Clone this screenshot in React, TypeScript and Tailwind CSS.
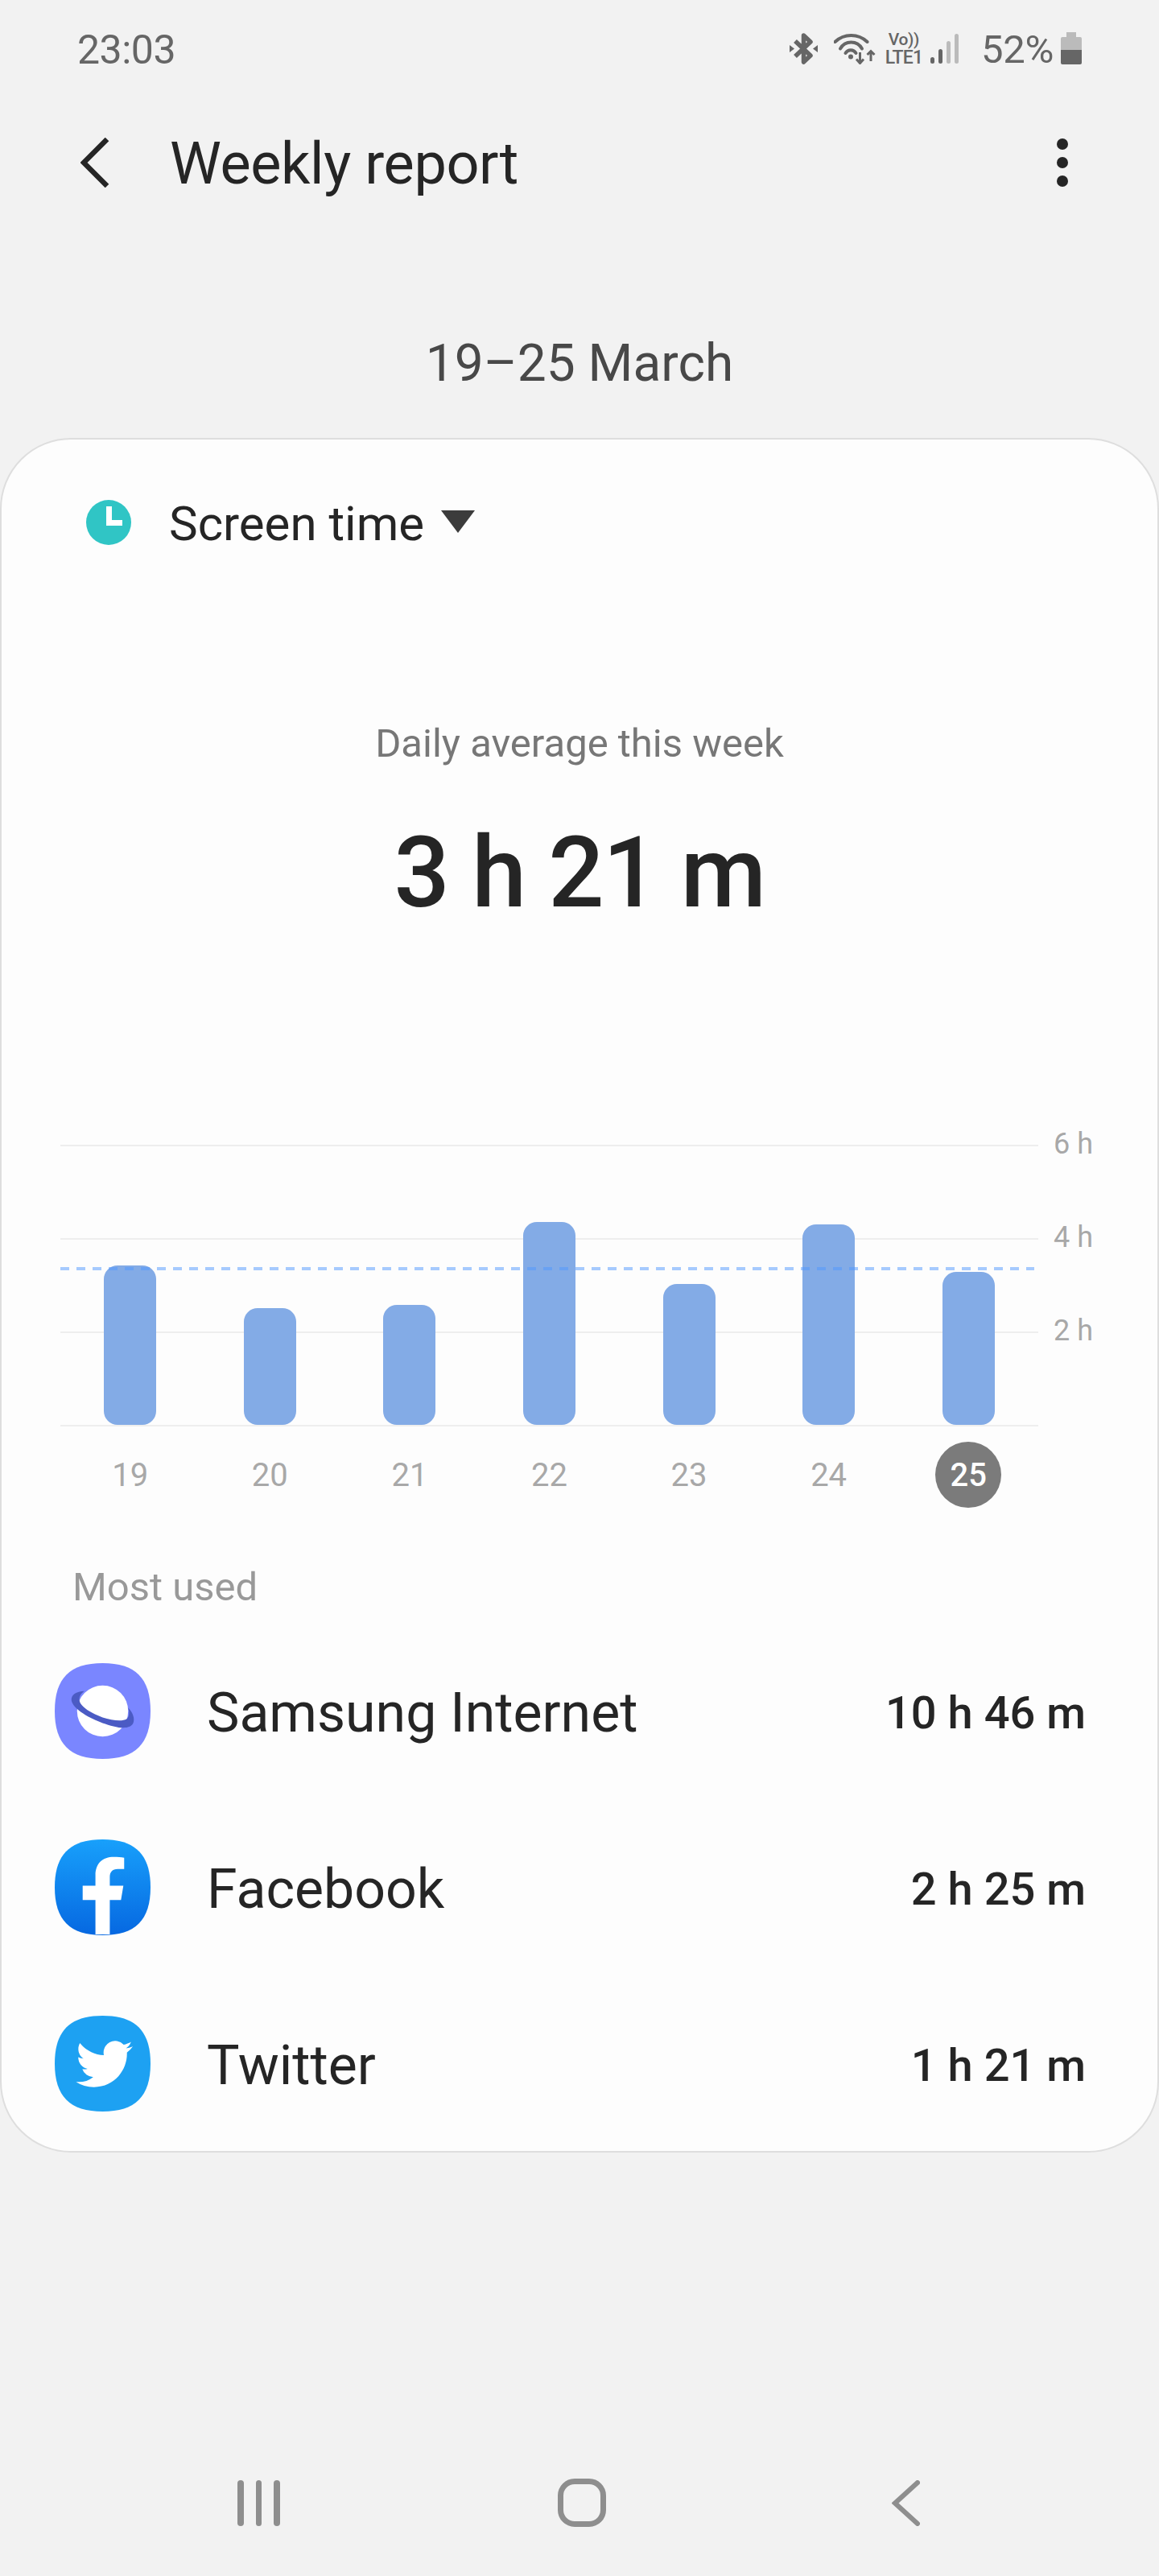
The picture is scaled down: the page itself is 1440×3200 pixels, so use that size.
import type { ReactNode } from "react";

const font = "font-['Roboto',sans-serif]";

// Bar tops were measured from the 1770px baseline of the chart.
const bars = [
  { day: "19", height: 198 },
  { day: "20", height: 145 },
  { day: "21", height: 149 },
  { day: "22", height: 252 },
  { day: "23", height: 175 },
  { day: "24", height: 249 },
  { day: "25", height: 190 },
];

const squircle =
  "M60 0C101 0 120 19 120 60C120 101 101 120 60 120C19 120 0 101 0 60C0 19 19 0 60 0Z";

function StatusBar() {
  return (
    <div className="flex h-[120px] items-center justify-between pl-[96px] pr-[96px] text-[#666666]">
      <span className="pt-[3px] text-[50px] leading-none tracking-[-0.5px]">23:03</span>
      <div className="flex items-center">
        <svg width="35" height="41" viewBox="0 0 35 41" fill="none">
          <path
            d="M7 11L26 29L17.5 37V4L26 12L7 30"
            stroke="#666666"
            strokeWidth="5.5"
            strokeLinejoin="round"
          />
          <path d="M0 16L6 20.5L0 25Z M35 16L29 20.5L35 25Z" fill="#666666" />
        </svg>
        <svg className="ml-[20px]" width="52" height="39" viewBox="0 0 52 39" fill="none">
          <g stroke="#666666" strokeWidth="4" strokeLinecap="round">
            <path d="M1.5 11A29 29 0 0 1 41.5 11" />
            <path d="M8 19.5A15.4 15.4 0 0 1 35 19.5" />
            <path d="M14.5 25A7.5 7.5 0 0 1 27.5 25" />
          </g>
          <circle cx="21" cy="29.5" r="3" fill="#666666" />
          <path d="M32.5 24V37M28 32.5L32.5 37.5L37 32.5" stroke="#666666" strokeWidth="3" />
          <path d="M46 35V23M41.5 27L46 22.5L50.5 27" stroke="#666666" strokeWidth="3" />
        </svg>
        <div className="ml-[11px] flex w-[47px] flex-col items-center pt-[2px] font-medium leading-none">
          <span className="h-[21px] text-[21px] tracking-[-0.3px]">Vo))</span>
          <span className="text-[23px] tracking-[-0.8px]">LTE1</span>
        </div>
        <div className="ml-[10px] flex h-[37px] items-end gap-[5.5px]">
          <div className="h-[8px] w-[4.5px] rounded-full bg-[#666666]" />
          <div className="h-[18px] w-[4.5px] rounded-full bg-[#666666]" />
          <div className="h-[28px] w-[4.5px] rounded-full bg-[#bbbbbb]" />
          <div className="h-[37px] w-[4.5px] rounded-full bg-[#bbbbbb]" />
        </div>
        <span className="ml-[28px] pt-[3px] text-[49px] leading-none tracking-[-0.3px]">52%</span>
        <svg className="ml-[9px]" width="26" height="40" viewBox="0 0 26 40">
          <path d="M7 0H19V6H24A2 2 0 0 1 26 8V22H0V8A2 2 0 0 1 2 6H7Z" fill="#bbbbbb" />
          <path d="M0 22H26V38A2 2 0 0 1 24 40H2A2 2 0 0 1 0 38Z" fill="#666666" />
        </svg>
      </div>
    </div>
  );
}

function Header() {
  return (
    <div className="flex h-[164px] items-center pl-[100px] pr-[113px] text-[#252525]">
      <svg width="36" height="62" viewBox="0 0 36 62" fill="none">
        <path d="M33 2L4 31L33 60" stroke="#252525" strokeWidth="6.5" />
      </svg>
      <h1 className="ml-[75px] pt-[3px] text-[72px] font-normal leading-none tracking-[-0.4px]">Weekly report</h1>
      <div className="ml-auto flex flex-col gap-[9px]">
        <div className="h-[14px] w-[14px] rounded-full bg-[#252525]" />
        <div className="h-[14px] w-[14px] rounded-full bg-[#252525]" />
        <div className="h-[14px] w-[14px] rounded-full bg-[#252525]" />
      </div>
    </div>
  );
}

function Chart() {
  return (
    <div className="relative mt-[274px] ml-[73px]">
      {["6 h", "4 h", "2 h"].map((label) => (
        <div key={label} className="flex h-[116px] items-start">
          <div className="h-[2px] w-[1215px] bg-[#eeeeee]" />
          <span className="-mt-[21px] ml-[19px] text-[36px] leading-[40px] text-[#a8a8a8]">{label}</span>
        </div>
      ))}
      <div className="h-[2px] w-[1215px] bg-[#eeeeee]" />
      <div className="absolute left-0 top-0 grid h-[348px] w-[1215px] grid-cols-7 items-end justify-items-center">
        {bars.map((bar) => (
          <div
            key={bar.day}
            className="w-[65px] rounded-[17px] bg-[#83abe6]"
            style={{ height: bar.height }}
          />
        ))}
      </div>
      <div className="absolute left-0 top-[152px] h-[4px] w-[1210px] bg-[repeating-linear-gradient(90deg,#4f97ff_0,#4f97ff_11px,transparent_11px,transparent_20px)] opacity-50" />
      <div className="mt-[19px] grid h-[82px] w-[1215px] grid-cols-7 items-center justify-items-center">
        {bars.map((bar) =>
          bar.day === "25" ? (
            <div
              key={bar.day}
              className="flex h-[82px] w-[82px] items-center justify-center rounded-full bg-[#7b7b7b] pt-[2px] text-[40px] font-medium text-white"
            >
              {bar.day}
            </div>
          ) : (
            <span key={bar.day} className="pt-[2px] text-[40px] text-[#a8a8a8]">
              {bar.day}
            </span>
          ),
        )}
      </div>
    </div>
  );
}

function AppRow({ icon, name, time }: { icon: ReactNode; name: string; time: string }) {
  return (
    <div className="flex h-[219px] items-center pl-[66px] pr-[89px] text-[#252525]">
      <svg width="119" height="119" viewBox="0 0 120 120">
        {icon}
      </svg>
      <span className="ml-[70px] pt-[4px] text-[68px] leading-none">{name}</span>
      <span className="ml-auto pt-[4px] text-[56px] font-medium leading-none">{time}</span>
    </div>
  );
}

export default function App() {
  return (
    <div className={`${font} flex h-[3200px] w-[1440px] flex-col bg-[#f2f2f2]`}>
      <StatusBar />
      <Header />
      <div className="flex h-[260px] justify-center pt-[138px]">
        <span className="text-[64px] leading-[60px] text-[#484848]">19–25 March</span>
      </div>

      <div className="h-[2130px] rounded-[88px] border-2 border-[#dedede] bg-[#fdfdfd] pt-[73px]">
        <div className="flex h-[60px] items-center pl-[105px]">
          <svg width="56" height="56" viewBox="0 0 56 56">
            <circle cx="28" cy="28" r="28" fill="#30c5c5" />
            <path d="M25 8H32V25H45V32H25Z" fill="#ffffff" />
          </svg>
          <span className="ml-[47px] pt-[3px] text-[60px] leading-none text-[#252525]">Screen time</span>
          <svg className="ml-[21px] -mt-[3px]" width="42" height="28" viewBox="0 0 42 28">
            <path d="M0 0H42L21 28Z" fill="#3c3c3c" />
          </svg>
        </div>

        <div className="mt-[215px] text-center text-[49px] leading-[60px] text-[#777777]">
          Daily average this week
        </div>
        <div className="mt-[66px] text-center text-[122px] font-medium leading-[130px] tracking-[-1.5px] text-[#252525]">
          3 h 21 m
        </div>

        <div className="-mt-[2px]">
          <Chart />
        </div>

        <div className="mt-[69px] pl-[88px] text-[49px] leading-[60px] text-[#999999]">Most used</div>

        <div className="mt-[14px]">
          <AppRow
            name="Samsung Internet"
            time="10 h 46 m"
            icon={
              <>
                <path d={squircle} fill="#7a86ff" />
                <circle cx="60" cy="60" r="32" fill="#ffffff" />
                <path
                  d="M37 35C27 35 20 40 21 47C23 58 45 70 60 75C75 80 92 85 98 76C101 70 98 62 92 56C94 62 93 68 90 70C85 73 72 72 60 68C48 64 32 55 31 47C30 42 33 38 37 35Z"
                  fill="#4b5bc4"
                />
              </>
            }
          />
          <AppRow
            name="Facebook"
            time="2 h 25 m"
            icon={
              <>
                <defs>
                  <linearGradient id="fb" x1="0" y1="0" x2="0" y2="1">
                    <stop offset="0" stopColor="#18a0fb" />
                    <stop offset="1" stopColor="#0668e1" />
                  </linearGradient>
                </defs>
                <path d={squircle} fill="url(#fb)" />
                <path
                  d="M51 119V76H35V58H51V45C51 30 60 22 74 22C79 22 83 22.3 87 23V37H79C72 37 69 41 69 47V58H86L83 76H69V119Z"
                  fill="#ffffff"
                />
              </>
            }
          />
          <AppRow
            name="Twitter"
            time="1 h 21 m"
            icon={
              <>
                <path d={squircle} fill="#1da1f2" />
                <g transform="translate(26.7 25) scale(2.96)">
                  <path
                    d="M23.953 4.57a10 10 0 01-2.825.775 4.958 4.958 0 002.163-2.723c-.951.555-2.005.959-3.127 1.184a4.92 4.92 0 00-8.384 4.482C7.69 8.095 4.067 6.13 1.64 3.162a4.822 4.822 0 00-.666 2.475c0 1.71.87 3.213 2.188 4.096a4.904 4.904 0 01-2.228-.616v.06a4.923 4.923 0 003.946 4.827 4.996 4.996 0 01-2.212.085 4.936 4.936 0 004.604 3.417 9.867 9.867 0 01-6.102 2.105c-.39 0-.779-.023-1.17-.067a13.995 13.995 0 007.557 2.209c9.053 0 13.998-7.496 13.998-13.985 0-.21 0-.42-.015-.63A9.935 9.935 0 0024 4.59z"
                    fill="#ffffff"
                  />
                </g>
              </>
            }
          />
        </div>
      </div>

      <div className="mt-[405px] flex h-[60px] items-center">
        <div className="ml-[295px] flex gap-[15px]">
          <div className="h-[57px] w-[7.5px] rounded-full bg-[#8e8e8e]" />
          <div className="h-[57px] w-[7.5px] rounded-full bg-[#8e8e8e]" />
          <div className="h-[57px] w-[7.5px] rounded-full bg-[#8e8e8e]" />
        </div>
        <div className="ml-[345px] h-[60px] w-[60px] rounded-[21px] border-[7px] border-[#8e8e8e]" />
        <svg className="ml-[355px]" width="35" height="57" viewBox="0 0 35 57" fill="none">
          <path d="M32 3L4 28.5L32 54" stroke="#8e8e8e" strokeWidth="6" strokeLinecap="round" />
        </svg>
      </div>
    </div>
  );
}
